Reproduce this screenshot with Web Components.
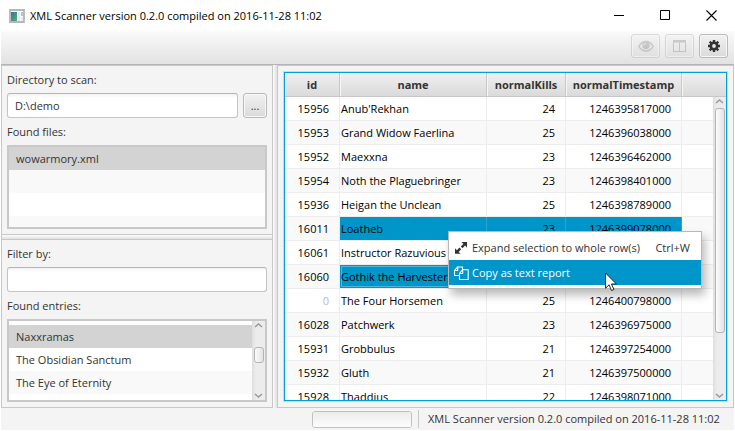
<!DOCTYPE html>
<html lang="en">
<head>
<meta charset="utf-8">
<title>XML Scanner</title>
<style>
html, body { margin: 0; height: 100%; }
body { font-family: "Open Sans", "Noto Sans", sans-serif; font-size: 11px; line-height: 16px; color: #333; background: #fff; overflow: hidden; --line: #c8c8c8; --accent: #0096c9; }
</style>
</head>
<body>
<app-window></app-window>

<template id="t-window">
<style>
:host { display: flex; flex-direction: column; height: 100vh; box-sizing: border-box; padding: 0 1px 1px; }
.split { flex: 1; min-height: 0; display: flex; background: #f4f4f4; }
.left { flex: 0 0 272px; display: flex; flex-direction: column; min-width: 0; border: 1px solid var(--line); box-sizing: border-box; }
.pane { flex: 1 1 0; padding: 5px; box-sizing: border-box; display: flex; flex-direction: column; min-height: 0; }
.hdiv { flex: 0 0 4px; border: solid var(--line); border-width: 1px 0; background: linear-gradient(#fcfcfc, #e0e0e0); }
.vdiv { flex: 0 0 4px; background: linear-gradient(90deg, #fcfcfc, #e0e0e0); }
.right { flex: 1; min-width: 0; display: flex; position: relative; border: 1px solid var(--line); padding: 5px; }
data-grid { flex: 1; min-width: 0; }
context-menu { position: absolute; left: 170px; top: 165px; z-index: 2; }
mouse-pointer { position: absolute; left: 327px; top: 206px; z-index: 3; }
.more { width: 24px; height: 25px; }
</style>
<title-bar>XML Scanner version 0.2.0 compiled on 2016-11-28 11:02</title-bar>
<tool-bar></tool-bar>
<div class="split">
  <div class="left">
    <div class="pane">
      <text-field label="Directory to scan:" value="D:\demo"><push-button slot="action" label="Browse" class="more">...</push-button></text-field>
      <entry-list label="Found files:" items="wowarmory.xml|||" selected="0"></entry-list>
    </div>
    <div class="hdiv"></div>
    <div class="pane">
      <text-field label="Filter by:" value=""></text-field>
      <entry-list label="Found entries:" items="|Naxxramas|The Obsidian Sanctum|The Eye of Eternity|" selected="1" scrolled></entry-list>
    </div>
  </div>
  <div class="vdiv"></div>
  <div class="right">
    <data-grid></data-grid>
    <context-menu></context-menu>
    <mouse-pointer></mouse-pointer>
  </div>
</div>
<status-bar>XML Scanner version 0.2.0 compiled on 2016-11-28 11:02</status-bar>
</template>

<template id="t-title">
<style>
:host { display: flex; align-items: center; flex: 0 0 31px; padding-left: 8px; color: #000; }
.name { flex: 1; padding-left: 5px; white-space: nowrap; }
button { width: 46px; height: 31px; border: 0; padding: 0; background: none; display: grid; place-items: center; }
svg { display: block; }
</style>
<svg width="16" height="14" viewBox="0 0 16 14"><defs><linearGradient id="g" x2="1" y2="1"><stop stop-color="#3c6fa5"/><stop offset="1" stop-color="#53b06c"/></linearGradient></defs><path d="M1 1h14v12H1z" fill="#fff" stroke="#b3b7ba" stroke-width="1.800"/><path d="M2 3h6v9H2z" fill="url(#g)"/><path d="M9 3h2v9H9z" fill="#e4e8ec"/><path d="M12 3h2v4h-2z" fill="#a9cdb8"/><path d="M12 8h2v4h-2z" fill="#e4ebee"/></svg>
<span class="name"><slot></slot></span>
<button aria-label="Minimize"><svg width="11" height="11"><path d="M0 5.500h10" stroke="#000"/></svg></button>
<button aria-label="Maximize"><svg width="11" height="11"><path d="M.5.5h9v9h-9z" fill="none" stroke="#000"/></svg></button>
<button aria-label="Close"><svg width="11" height="11"><path d="M.5.5l10 10m0-10l-10 10" stroke="#000" stroke-width="1.100"/></svg></button>
</template>

<template id="t-toolbar">
<style>
:host { display: flex; flex: 0 0 auto; justify-content: flex-end; align-items: center; gap: 5px; padding: 0 6px 4px; height: 29px; background: linear-gradient(#fafafa, #e2e2e2); border-bottom: 1px solid #b4b4b4; }
push-button { width: 29px; height: 24px; }
svg { display: block; }
</style>
<push-button label="Preview" off><svg width="16" height="12" viewBox="0 0 16 12"><path d="M.8 6.300C3 2.800 5.300 1.500 8 1.500s5 1.300 7.200 4.800C13 9.800 10.700 11 8 11S3 9.800.8 6.300z" fill="none" stroke="#333" stroke-width="1.300"/><circle cx="8" cy="5.500" r="3.700" fill="#333"/><path d="M6 5.500A2 2 0 0 1 8 3.500" stroke="#fff" stroke-width=".9" fill="none"/></svg></push-button>
<push-button label="Columns" off><svg width="13" height="12" viewBox="0 0 13 12"><path d="M0 0h13v12H0zM1 2.500V11h5V2.500zM7 2.500V11h5V2.500z" fill="#333" fill-rule="evenodd"/></svg></push-button>
<push-button label="Settings"><svg width="12" height="12" viewBox="0 0 12 12"><g fill="none" stroke="#333"><circle cx="6" cy="6" r="3.200" stroke-width="2.600"/><g stroke-width="2.400"><path d="M6 0v2.500M6 9.500V12M0 6h2.500M9.500 6H12M1.700 1.700l1.800 1.800M8.500 8.500l1.800 1.800M10.300 1.700L8.500 3.500M3.500 8.500l-1.800 1.800"/></g></g></svg></push-button>
</template>

<template id="t-button">
<style>
:host { display: block; }
button { width: 100%; height: 100%; padding: 0; margin: 0; box-sizing: border-box; font: inherit; color: #333; display: grid; place-items: center; border: 1px solid #b9b9b9; border-radius: 3px; background: linear-gradient(#f1f1f1, #dadada); box-shadow: inset 0 0 0 1px #f7f7f7; }
button:disabled { opacity: .5; }
button:disabled ::slotted(svg) { opacity: .4; }
</style>
<button><slot></slot></button>
</template>

<template id="t-field">
<style>
:host { display: block; }
label { display: block; line-height: 16px; padding: 1px 0 5px; }
.row { display: flex; gap: 5px; }
input { flex: 1; min-width: 0; height: 25px; box-sizing: border-box; font: inherit; color: #333; padding: 0 7px; border: 1px solid #c4c4c4; border-top-color: #b5b5b5; border-radius: 3px; background: linear-gradient(#f2f2f2, #fff 4px); outline: 0; }
</style>
<label for="f"></label>
<div class="row"><input id="f" type="text"><slot name="action"></slot></div>
</template>

<template id="t-list">
<style>
:host { flex: 1; min-height: 0; display: flex; flex-direction: column; }
.cap { padding: 6px 0 5px; line-height: 16px; }
.box { flex: 1; min-height: 0; display: flex; border: 2px solid var(--line); background: #fff; overflow: hidden; }
ul { flex: 1; margin: 0; padding: 0; list-style: none; }
li { height: 23px; line-height: 23px; padding-left: 7px; }
li:nth-child(even) { background: #f9f9f9; }
:host([scrolled]) li:first-child { height: 4px; }
li[aria-selected=true] { background: #d3d3d3; }
</style>
<div class="cap" id="c"></div>
<div class="box"><ul role="listbox" aria-labelledby="c"></ul></div>
</template>

<template id="t-scroll">
<style>
:host { flex: 0 0 13px; display: flex; flex-direction: column; align-items: center; box-sizing: border-box; background: linear-gradient(90deg, #dedede, #ececec 30%, #ececec); }
svg { flex: 0 0 10px; display: block; }
.track { flex: 1; width: 10px; display: flex; flex-direction: column; }
.thumb { box-sizing: border-box; border: 1px solid #b4b4b4; border-radius: 3px; background: linear-gradient(90deg, #fcfcfc, #e2e2e2); }
</style>
<svg width="9" height="10" viewBox="0 0 9 10"><path d="M1 6l3.500-3 3.500 3" fill="none" stroke="#999" stroke-width="1.500"/></svg>
<div class="track"><div class="before"></div><div class="thumb"></div></div>
<svg width="9" height="10" viewBox="0 0 9 10"><path d="M1 4l3.500 3 3.500-3" fill="none" stroke="#999" stroke-width="1.500"/></svg>
</template>

<template id="t-grid">
<style>
:host { display: flex; flex-direction: column; min-height: 0; box-sizing: border-box; border: 1px solid #00a0d8; outline: 1px solid #cfd8dc; margin: 1px; background: #fff; color: #000; }
.body { flex: 1; min-height: 0; display: flex; overflow: hidden; }
.view { flex: 1; min-width: 0; overflow: hidden; }
table { width: 100%; table-layout: fixed; border-collapse: separate; border-spacing: 0; }
col.id { width: 55px; } col.name { width: 147px; } col.kills { width: 79px; } col.stamp { width: 116px; }
th, td { box-sizing: border-box; height: 24px; padding: 1px 0 0; line-height: 16px; border: solid #ededed; border-width: 0 1px 1px 0; white-space: nowrap; }
th { color: #333; font-weight: 700; border-color: var(--line); background: linear-gradient(#f0f0f0, #dadada); box-shadow: inset 1px 1px #f6f6f6; }
th:last-child, td:last-child { border-right: 0; }
td { text-align: right; padding-right: 10px; }
td:nth-child(2) { text-align: left; padding: 1px 0 0 1px; }
tr:nth-child(even) td { background: #f9f9f9; }
tr.sel td:nth-child(n+2):nth-child(-n+4) { background: var(--accent); border-right-color: #26a6d1; }
tr.focus td:nth-child(2) { box-shadow: inset 0 0 0 1px var(--accent), inset 0 0 0 2px #4cb5d9; }
.zero { color: #b0bccb; }
.corner { flex: 0 0 23px; background: linear-gradient(#f0f0f0, #dadada); border-bottom: 1px solid var(--line); box-shadow: inset 0 1px #f6f6f6; }
.side { flex: 0 0 13px; display: flex; flex-direction: column; }
scroll-bar { flex: 1; }
</style>
<div class="body">
  <div class="view"><table>
    <colgroup><col class="id"><col class="name"><col class="kills"><col class="stamp"><col></colgroup>
    <thead><tr><th>id</th><th>name</th><th>normalKills</th><th>normalTimestamp</th><th></th></tr></thead>
    <tbody></tbody>
  </table></div>
  <div class="side"><div class="corner"></div><scroll-bar before="1" size="225"></scroll-bar></div>
</div>
</template>

<template id="t-menu">
<style>
:host { display: block; width: 254px; box-sizing: border-box; padding: 3px 0; border: 1px solid #b8b8b8; background: #fff; box-shadow: 3px 6px 9px rgba(0,0,0,.28); }
button { display: flex; align-items: center; width: 100%; height: 25px; border: 0; padding: 0 11px 0 5px; background: none; font: inherit; color: #333; text-align: left; white-space: nowrap; }
svg { flex: 0 0 15px; margin-right: 3px; }
kbd { font: inherit; margin-left: auto; }
button.on { background: var(--accent); color: #fff; }
</style>
<div role="menu">
<button role="menuitem"><svg width="15" height="14" viewBox="0 0 15 14"><path d="M7.500 1H13v5.500l-1.900-1.900-2.600 2.600-1.700-1.700 2.600-2.600zM6.700 12.800H1V7.300l1.900 1.900 2.600-2.600 1.700 1.700-2.600 2.600z" fill="#333"/></svg><span>Expand selection to whole row(s)</span><kbd>Ctrl+W</kbd></button>
<button role="menuitem" class="on"><svg width="15" height="14" viewBox="0 0 15 14"><path d="M5.500 9.500h-5v-5l3-3.500h5v2.500M.5 4.500h3.200V1M5.500 13.500v-6l3-3.800h5.700v9.800zM5.500 7.500h3.200V3.700M8.500 3.500V1" fill="none" stroke="#fff" stroke-width="1.100"/></svg><span>Copy as text report</span></button>
</div>
</template>

<template id="t-pointer">
<style>:host { display: block; } svg { display: block; }</style>
<svg width="13" height="20" viewBox="0 0 13 20"><path d="M.6 1v15.200l3.500-3.400 2.400 5.700 2.400-1-2.400-5.500h4.900z" fill="#fff" stroke="#222" stroke-width="1"/></svg>
</template>

<template id="t-status">
<style>
:host { flex: 0 0 22px; display: flex; justify-content: flex-end; align-items: center; background: #f4f4f4; padding: 0 3px 0 0; white-space: nowrap; }
progress { appearance: none; -webkit-appearance: none; width: 100px; height: 17px; box-sizing: border-box; border: 1px solid #c0c0c0; border-radius: 3px; background: #fdfdfd; }
progress::-webkit-progress-bar { background: linear-gradient(#ececec, #fdfdfd); border-radius: 2px; }
.sep { width: 1px; height: 18px; background: #c8c8c8; margin: 0 9px 0 6px; }
.text { min-width: 303px; }
</style>
<progress value="0" max="1" aria-label="Progress"></progress><span class="sep"></span><span class="text"><slot></slot></span>
</template>

<script>
class Base extends HTMLElement {
  constructor() {
    super();
    this.attachShadow({ mode: "open" }).append(document.getElementById(this.constructor.tpl).content.cloneNode(true));
  }
  $(q) { return this.shadowRoot.querySelector(q); }
}
class ScrollBar extends Base {
  static tpl = "t-scroll";
  connectedCallback() {
    this.$(".before").style.height = this.getAttribute("before") + "px";
    this.$(".thumb").style.height = this.getAttribute("size") + "px";
  }
}
class PushButton extends Base {
  static tpl = "t-button";
  connectedCallback() {
    const b = this.$("button");
    b.setAttribute("aria-label", this.getAttribute("label"));
    b.disabled = this.hasAttribute("off");
  }
}
class TextField extends Base {
  static tpl = "t-field";
  connectedCallback() {
    this.$("label").textContent = this.getAttribute("label");
    this.$("input").value = this.getAttribute("value");
  }
}
class EntryList extends Base {
  static tpl = "t-list";
  connectedCallback() {
    this.$(".cap").textContent = this.getAttribute("label");
    const ul = this.$("ul");
    this.getAttribute("items").split("|").forEach((text, i) => {
      const li = document.createElement("li");
      li.setAttribute("role", "option");
      li.setAttribute("aria-selected", String(i === Number(this.getAttribute("selected"))));
      li.textContent = text;
      ul.append(li);
    });
    if (this.hasAttribute("scrolled")) {
      const bar = document.createElement("scroll-bar");
      bar.setAttribute("before", "16");
      bar.setAttribute("size", "16");
      this.$(".box").append(bar);
    }
  }
}
class DataGrid extends Base {
  static tpl = "t-grid";
  connectedCallback() {
    const rows = [
      ["15956", "Anub'Rekhan", "24", "1246395817000"],
      ["15953", "Grand Widow Faerlina", "25", "1246396038000"],
      ["15952", "Maexxna", "23", "1246396462000"],
      ["15954", "Noth the Plaguebringer", "23", "1246398401000"],
      ["15936", "Heigan the Unclean", "25", "1246398789000"],
      ["16011", "Loatheb", "23", "1246399078000", "sel"],
      ["16061", "Instructor Razuvious", "", ""],
      ["16060", "Gothik the Harvester", "", "", "sel focus"],
      ["0", "The Four Horsemen", "25", "1246400798000"],
      ["16028", "Patchwerk", "23", "1246396975000"],
      ["15931", "Grobbulus", "21", "1246397254000"],
      ["15932", "Gluth", "21", "1246397500000"],
      ["15928", "Thaddius", "22", "1246398071000"]
    ];
    for (const [id, name, kills, stamp, cls = ""] of rows) {
      const tr = document.createElement("tr");
      tr.className = cls;
      for (const text of [id, name, kills, stamp, ""]) {
        const td = document.createElement("td");
        td.textContent = text;
        if (text === "0") td.className = "zero";
        tr.append(td);
      }
      this.$("tbody").append(tr);
    }
  }
}
const plain = tpl => class extends Base { static tpl = tpl; };
customElements.define("scroll-bar", ScrollBar);
customElements.define("push-button", PushButton);
customElements.define("text-field", TextField);
customElements.define("entry-list", EntryList);
customElements.define("data-grid", DataGrid);
customElements.define("title-bar", plain("t-title"));
customElements.define("tool-bar", plain("t-toolbar"));
customElements.define("context-menu", plain("t-menu"));
customElements.define("mouse-pointer", plain("t-pointer"));
customElements.define("status-bar", plain("t-status"));
customElements.define("app-window", plain("t-window"));
</script>
</body>
</html>
